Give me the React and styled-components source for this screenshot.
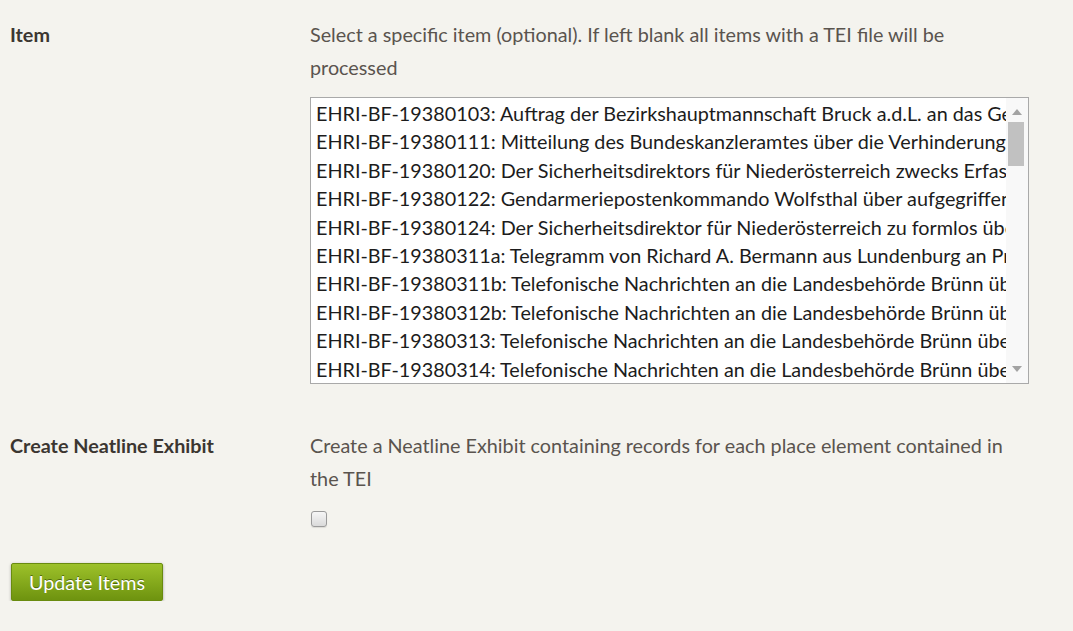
import React from 'react';
import styled, { createGlobalStyle } from 'styled-components';

const items = [
    'EHRI-BF-19380103: Auftrag der Bezirkshauptmannschaft Bruck a.d.L. an das Gendarmeriepostenkommando',
    'EHRI-BF-19380111: Mitteilung des Bundeskanzleramtes über die Verhinderung der Einreise',
    'EHRI-BF-19380120: Der Sicherheitsdirektors für Niederösterreich zwecks Erfassung der Flüchtlinge',
    'EHRI-BF-19380122: Gendarmeriepostenkommando Wolfsthal über aufgegriffene Flüchtlinge',
    'EHRI-BF-19380124: Der Sicherheitsdirektor für Niederösterreich zu formlos über die Grenze',
    'EHRI-BF-19380311a: Telegramm von Richard A. Bermann aus Lundenburg an Prag',
    'EHRI-BF-19380311b: Telefonische Nachrichten an die Landesbehörde Brünn über die Grenze',
    'EHRI-BF-19380312b: Telefonische Nachrichten an die Landesbehörde Brünn über die Grenze',
    'EHRI-BF-19380313: Telefonische Nachrichten an die Landesbehörde Brünn über die Grenze',
    'EHRI-BF-19380314: Telefonische Nachrichten an die Landesbehörde Brünn über die Grenze',
]

const App = () =>{
    return(
        <Page>
            <GlobalStyle />
            <Field>
                <Label>Item</Label>
                <Inputs>
                    <Explanation>Select a specific item (optional). If left blank all items with a TEI file will be processed</Explanation>
                    <Listbox>
                        <Options>
                            {items.map((item, index)=>{
                                return <Option key={index}>{item}</Option>
                            })}
                        </Options>
                        <Scrollbar>
                            <Arrow viewBox="0 0 10 6"><path d="M0 6 L5 0 L10 6 Z" /></Arrow>
                            <Track>
                                <Thumb />
                            </Track>
                            <Arrow viewBox="0 0 10 6"><path d="M0 0 L5 6 L10 0 Z" /></Arrow>
                        </Scrollbar>
                    </Listbox>
                </Inputs>
            </Field>
            <Field>
                <Label>Create Neatline Exhibit</Label>
                <Inputs>
                    <Explanation>Create a Neatline Exhibit containing records for each place element contained in the TEI</Explanation>
                    <Checkbox type="checkbox" />
                </Inputs>
            </Field>
            <Button>Update Items</Button>
        </Page>
    );
}
const GlobalStyle = createGlobalStyle`
    body{
        margin: 0;
        background-color: #f4f3ee;
        font-family: Lato, "Liberation Sans", sans-serif;
    }
`;
const Page = styled.div`
    padding: 18px 0 0 10px;
`;
const Field = styled.div`
    display: grid;
    grid-template-columns: 300px 719px;
    margin-bottom: 45px;
`;
const Label = styled.div`
    font-size: 19.8px;
    line-height: 32.5px;
    font-weight: 700;
    color: #3b3631;
`;
const Inputs = styled.div`
    display: flex;
    flex-direction: column;
    align-items: flex-start;
`;
const Explanation = styled.p`
    margin: 0;
    font-size: 19.8px;
    line-height: 32.5px;
    color: #5a544e;
`;
const Listbox = styled.div`
    margin-top: 14px;
    width: 719px;
    height: 287px;
    box-sizing: border-box;
    border: 1px solid #a9a9a9;
    background: #fff;
    display: flex;
`;
const Options = styled.div`
    flex: 1;
    overflow: hidden;
    padding: 1px 0 0 5px;
`;
const Option = styled.div`
    white-space: nowrap;
    font-size: 19.8px;
    line-height: 28.4px;
    color: #1c1c1c;
`;
const Scrollbar = styled.div`
    width: 22px;
    display: flex;
    flex-direction: column;
    align-items: center;
    background: #f8f8f8;
    padding: 11px 0 11px;
`;
const Arrow = styled.svg`
    width: 10px;
    height: 6px;
    fill: #a3a3a3;
    flex-shrink: 0;
`;
const Track = styled.div`
    flex: 1;
    width: 100%;
    padding: 7px 4px 0 2px;
    box-sizing: border-box;
`;
const Thumb = styled.div`
    height: 44px;
    background: #c1c1c1;
`;
const Checkbox = styled.input`
    appearance: none;
    margin: 17px 0 0 1px;
    width: 16px;
    height: 16px;
    border: 1px solid #9a9a9a;
    border-radius: 3px;
    background: linear-gradient(#f6f6f6, #dadada);
    box-shadow: 0 1px 1px rgba(0,0,0,0.1);
`;
const Button = styled.button`
    display: block;
    margin: -9px 0 0 1px;
    width: 152px;
    height: 38px;
    border: 1px solid #698b0f;
    border-radius: 2px;
    background: linear-gradient(#9dc12a, #6e930f);
    box-shadow: 0 1px 3px rgba(0,0,0,0.35);
    color: #fff;
    font-family: Lato, "Liberation Sans", sans-serif;
    font-size: 19.8px;
    text-shadow: 0 -1px 0 rgba(40,60,0,0.6);
    cursor: pointer;
`;
export default App;
